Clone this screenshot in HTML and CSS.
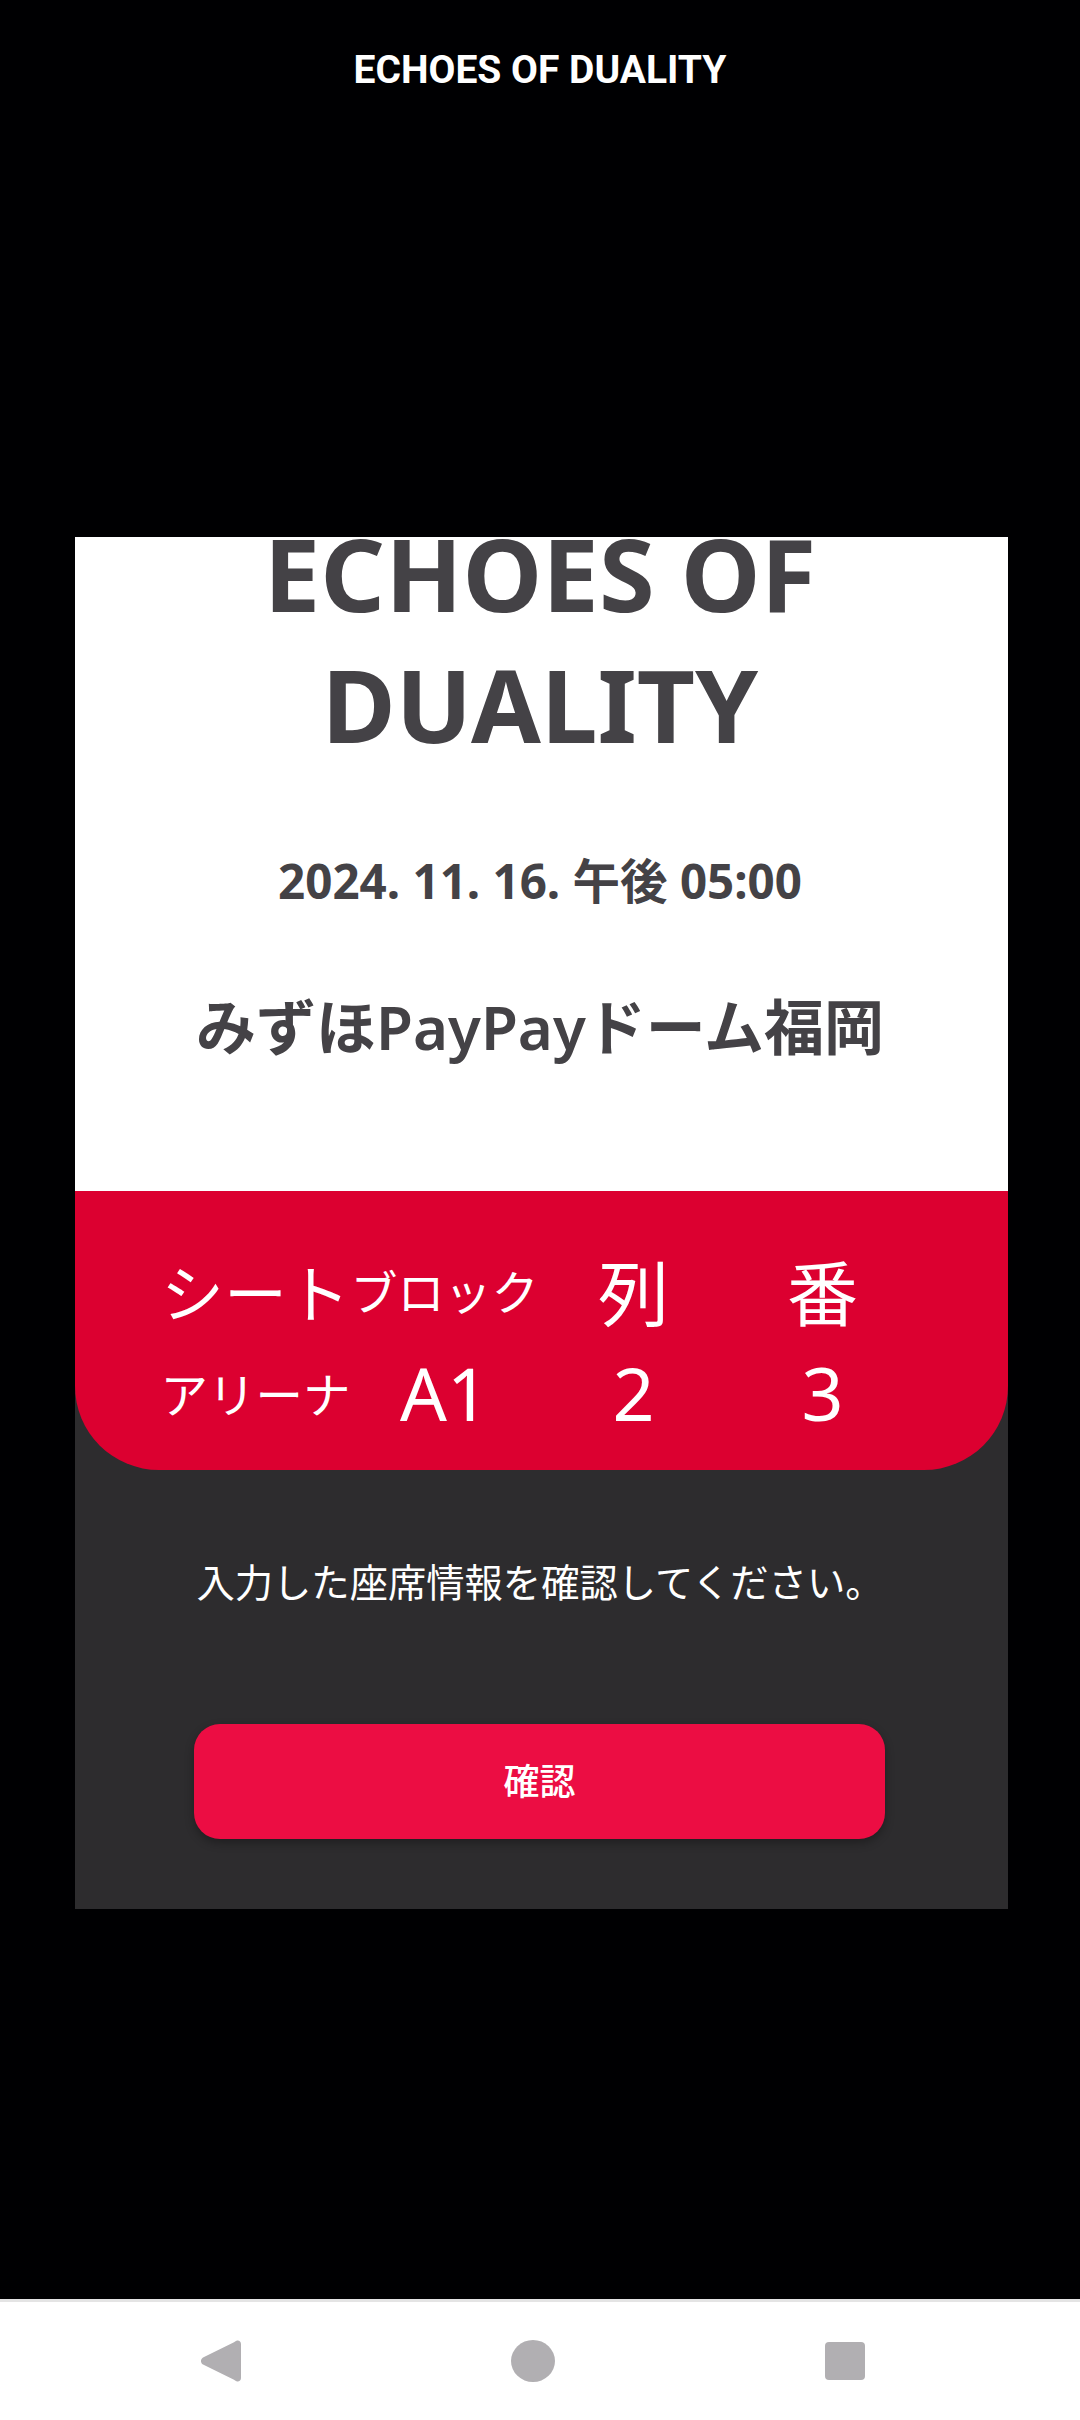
FILE: index.html
```html
<!DOCTYPE html>
<html lang="ja">

<head>
    <meta charset="UTF-8">
    <meta name="viewport" content="width=device-width, initial-scale=1.0">
    <title>ECHOES OF DUALITY</title>
    <link rel="stylesheet" href="styles.css">
</head>

<body>
    <header class="app-bar">ECHOES OF DUALITY</header>

    <main class="stage">
        <section class="card">
            <div class="ticket-info">
                <h1 class="ticket-title">ECHOES OF<br>DUALITY</h1>
                <p class="ticket-date">2024. 11. 16. 午後 05:00</p>
                <p class="ticket-venue">みずほPayPayドーム福岡</p>
            </div>

            <div class="seat">
                <span class="seat-head seat-head-lg">シート</span>
                <span class="seat-head">ブロック</span>
                <span class="seat-head seat-head-xl">列</span>
                <span class="seat-head seat-head-xl">番</span>
                <span class="seat-value seat-value-sm">アリーナ</span>
                <span class="seat-value">A1</span>
                <span class="seat-value">2</span>
                <span class="seat-value">3</span>
            </div>

            <div class="confirm">
                <p class="confirm-text">入力した座席情報を確認してください。</p>
                <button class="confirm-btn" type="button">確認</button>
            </div>
        </section>
    </main>

    <nav class="nav-bar">
        <svg class="nav-back" viewBox="0 0 40 42">
            <path d="M36 0.5c2-0.5 4 1 4 3.5v34c0 2.500-2 4-4 3.500c-1-0.300-2-1-3-1.800L2 24.500c-2.700-2-2.700-5 0-7L33 2.300c1-0.800 2-1.500 3-1.800z" />
        </svg>
        <span class="nav-home"></span>
        <span class="nav-recent"></span>
    </nav>
</body>

</html>
```

FILE: styles.css
```css
* {
    box-sizing: border-box;
}

body {
    margin: 0;
    height: 2420px;
    display: flex;
    flex-direction: column;
    background: #000002;
    font-family: "Noto Sans", "Noto Sans CJK JP", sans-serif;
}

.app-bar {
    height: 140px;
    display: flex;
    align-items: center;
    justify-content: center;
    color: white;
    font-family: Roboto, sans-serif;
    font-size: 39px;
    font-weight: 700;
}

.stage {
    flex: 1;
    padding: 397px 72px 0 75px;
}

.card {
    height: 1372px;
    background: #2d2c2e;
}

.ticket-info {
    display: flow-root;
    height: 654px;
    padding-right: 3px;
    background: white;
    color: #444246;
    text-align: center;
}

.ticket-title {
    margin: -29px 0 0;
    font-size: 101px;
    font-weight: 700;
    line-height: 131px;
}

.ticket-date {
    margin: 81px 0 0;
    font-size: 47.500px;
    font-weight: 700;
    line-height: 60px;
}

.ticket-venue {
    margin: 80px 0 0;
    font-size: 60px;
    font-weight: 600;
    line-height: 72px;
}

.seat {
    height: 279px;
    padding: 46px 90px 0 86px;
    display: grid;
    grid-template-columns: repeat(4, 189px);
    grid-template-rows: 104px 102px;
    align-items: center;
    justify-items: center;
    background: #dc0030;
    border-radius: 0 0 84px 84px;
    color: white;
}

.seat-head {
    font-size: 47px;
    white-space: nowrap;
}

.seat-head-lg {
    font-size: 63px;
}

.seat-head-xl {
    font-size: 71px;
}

.seat-value {
    font-size: 73.500px;
    white-space: nowrap;
}

.seat-value-sm {
    font-size: 47.500px;
}

.confirm {
    padding: 87px 3px 0 0;
    text-align: center;
}

.confirm-text {
    margin: 0;
    color: white;
    font-size: 38.300px;
    line-height: 50px;
}

.confirm-btn {
    display: block;
    width: 691px;
    height: 115px;
    margin: 117px 0 0 119px;
    padding: 0 0 5px;
    border: 0;
    border-radius: 26px;
    background: #ec0d43;
    color: white;
    font-family: inherit;
    font-size: 36px;
    font-weight: 500;
    box-shadow: 0 4px 10px rgba(0, 0, 0, 0.3);
}

.nav-bar {
    height: 121px;
    padding: 0 215px 0 201px;
    display: flex;
    align-items: center;
    justify-content: space-between;
    border-top: 3px solid #e4e4e4;
    background: white;
}

.nav-back {
    width: 40px;
    height: 42px;
    fill: #b1afb2;
}

.nav-home {
    width: 44px;
    height: 42px;
    border-radius: 50%;
    background: #b1afb2;
}

.nav-recent {
    width: 40px;
    height: 38px;
    border-radius: 4px;
    background: #b1afb2;
}
```
